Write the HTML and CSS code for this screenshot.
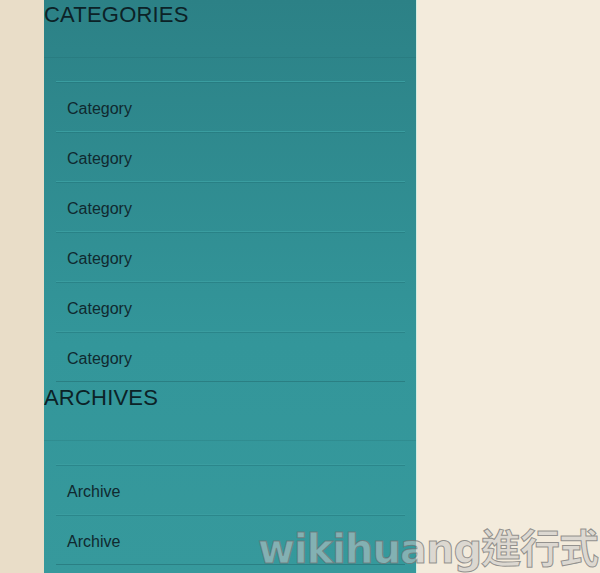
FILE: index.html
```html
<!DOCTYPE html>
<html>
<head>
<meta charset="utf-8">
<link rel="stylesheet" href="styles.css">
</head>
<body>
<div class="page">
  <div class="strip"></div>
  <aside class="sidebar">
    <section class="widget">
      <h2 class="widget-title">CATEGORIES</h2>
      <div class="rule"></div>
      <ul class="list">
        <li>Category</li>
        <li>Category</li>
        <li>Category</li>
        <li>Category</li>
        <li>Category</li>
        <li>Category</li>
      </ul>
    </section>
    <section class="widget">
      <h2 class="widget-title">ARCHIVES</h2>
      <div class="rule"></div>
      <ul class="list">
        <li>Archive</li>
        <li>Archive</li>
      </ul>
    </section>
  </aside>
  <div class="main"></div>
</div>
<div class="watermark">wikihuang進行式</div>
</body>
</html>
```
FILE: styles.css
```css
html, body {
  margin: 0;
  padding: 0;
  height: 100%;
  overflow: hidden;
}
body {
  background: #f3ebdc;
  font-family: "Liberation Sans", Arial, sans-serif;
}
.page {
  display: flex;
  height: 573px;
}
.strip {
  width: 44px;
  background: #e9ddc8;
  flex: none;
}
.sidebar {
  width: 372px;
  flex: none;
  border-right: 1px solid #d3ebe0;
  background: linear-gradient(#2c8186, #33969a 60%, #36999c);
  overflow: hidden;
}
.main {
  flex: 1;
  background: #f3ebdc;
}
.widget {
  padding-top: 2px;
}
.widget + .widget {
  padding-top: 3px;
}
.widget-title {
  margin: 0;
  font-size: 22px;
  line-height: 26px;
  font-weight: normal;
  color: #0c2227;
  letter-spacing: 0.2px;
}
.rule {
  margin-top: 29px;
  height: 1px;
  background: rgba(20, 80, 84, 0.15);
  margin-bottom: 23px;
}
.list {
  list-style: none;
  margin: 0 11px 0 12px;
  padding: 0;
}
.list li {
  height: 45px;
  padding-top: 4px;
  border-top: 1px solid #3a9da0;
  box-shadow: inset 0 1px 0 rgba(30, 110, 114, 0.4);
  padding-left: 11px;
  font-size: 16px;
  line-height: 45px;
  color: #10292f;
}
.list li:last-child {
  border-bottom: 1px solid #2a7f83;
}
.watermark {
  position: absolute;
  left: 258px;
  top: 517px;
  font-family: "DejaVu Sans", "Noto Sans CJK TC", sans-serif;
  font-weight: bold;
  font-size: 40px;
  letter-spacing: -1px;
  color: rgba(200, 200, 200, 0.55);
  -webkit-text-stroke: 1px rgba(110, 110, 110, 0.7);
  white-space: nowrap;
}
```
